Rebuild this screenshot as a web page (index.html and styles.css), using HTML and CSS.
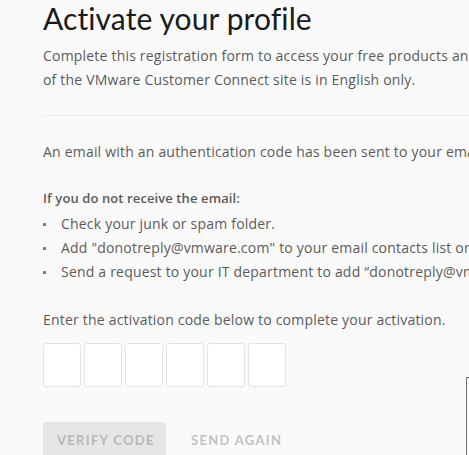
FILE: index.html
```html
<!DOCTYPE html>
<html lang="en">
<head>
<meta charset="utf-8">
<title>Activate your profile</title>
<link rel="stylesheet" href="styles.css">
</head>
<body>
<main class="page">
  <h1 class="title">Activate your profile</h1>
  <p class="intro">Complete this registration form to access your free products and evaluations. Please note that the content<br>of the VMware Customer Connect site is in English only.</p>
  <hr class="divider">
  <p class="notice">An email with an authentication code has been sent to your email address.</p>
  <p class="help-title">If you do not receive the email:</p>
  <ul class="help-list">
    <li>Check your junk or spam folder.</li>
    <li>Add "donotreply@vmware.com" to your email contacts list or allow it in your spam filter.</li>
    <li>Send a request to your IT department to add “donotreply@vmware.com” to the allowed senders list.</li>
  </ul>
  <p class="enter">Enter the activation code below to complete your activation.</p>
  <div class="code-row">
    <input class="code-box" type="text" maxlength="1" aria-label="Digit 1">
    <input class="code-box" type="text" maxlength="1" aria-label="Digit 2">
    <input class="code-box" type="text" maxlength="1" aria-label="Digit 3">
    <input class="code-box" type="text" maxlength="1" aria-label="Digit 4">
    <input class="code-box" type="text" maxlength="1" aria-label="Digit 5">
    <input class="code-box" type="text" maxlength="1" aria-label="Digit 6">
  </div>
  <div class="actions">
    <button class="btn btn-primary" type="button" disabled>Verify code</button>
    <button class="btn btn-link" type="button">Send again</button>
  </div>
</main>
<div class="side-panel" aria-hidden="true"></div>
</body>
</html>
```
FILE: styles.css
```css
html, body {
  margin: 0;
  padding: 0;
  background: #fafafa;
  height: 100%;
  overflow: hidden;
}

body {
  font-family: "Open Sans", Lato, Arial, sans-serif;
  color: #5a5a5a;
  position: relative;
}

.page {
  padding: 0 0 0 43px;
  white-space: nowrap;
}

.title {
  margin: 0;
  font-family: Lato, "Open Sans", Arial, sans-serif;
  font-size: 30px;
  line-height: 36px;
  font-weight: 400;
  color: #1b1b1b;
  letter-spacing: 0.1px;
}

.intro,
.notice,
.help-title,
.enter,
.help-list {
  margin: 0;
  font-size: 14px;
  line-height: 24px;
  letter-spacing: 0.2px;
}

.intro {
  margin-top: 8px;
}

.divider {
  margin: 23px 0 0 0;
  border: 0;
  height: 1px;
  background: #ebebeb;
}

.notice {
  margin-top: 24px;
}

.help-title {
  margin-top: 22px;
  font-weight: 600;
  font-size: 13px;
  letter-spacing: 0.1px;
}

.help-list {
  list-style: none;
  margin-top: 2px;
  padding: 0;
}

.help-list li {
  display: flex;
  align-items: center;
}

.help-list li::before {
  content: "";
  width: 3px;
  height: 3px;
  background: #7a7a7a;
  margin-right: 15px;
  margin-top: 1px;
  flex: none;
}

.enter {
  margin-top: 24px;
}

.code-row {
  display: flex;
  gap: 3px;
  margin-top: 11px;
}

.code-box {
  box-sizing: border-box;
  width: 38px;
  height: 44px;
  margin: 0;
  padding: 0;
  border: 1px solid #e3e3e3;
  border-radius: 3px;
  background: #fff;
}

.actions {
  display: flex;
  gap: 11px;
  margin-top: 35px;
}

.btn {
  box-sizing: border-box;
  height: 36px;
  padding: 0 14px;
  border: 0;
  border-radius: 3px;
  font-family: Lato, "Open Sans", Arial, sans-serif;
  font-size: 13px;
  font-weight: 700;
  letter-spacing: 1.3px;
  text-transform: uppercase;
  background: transparent;
}

.btn-primary {
  width: 123px;
  background: #e6e6e6;
  color: #b8b8b8;
}

.btn-link {
  color: #c2c2c2;
}

.side-panel {
  position: absolute;
  left: 466px;
  top: 377px;
  width: 40px;
  height: 120px;
  border-left: 1px solid #707070;
  border-top: 1px solid #707070;
  background: #fafafa;
}
```
